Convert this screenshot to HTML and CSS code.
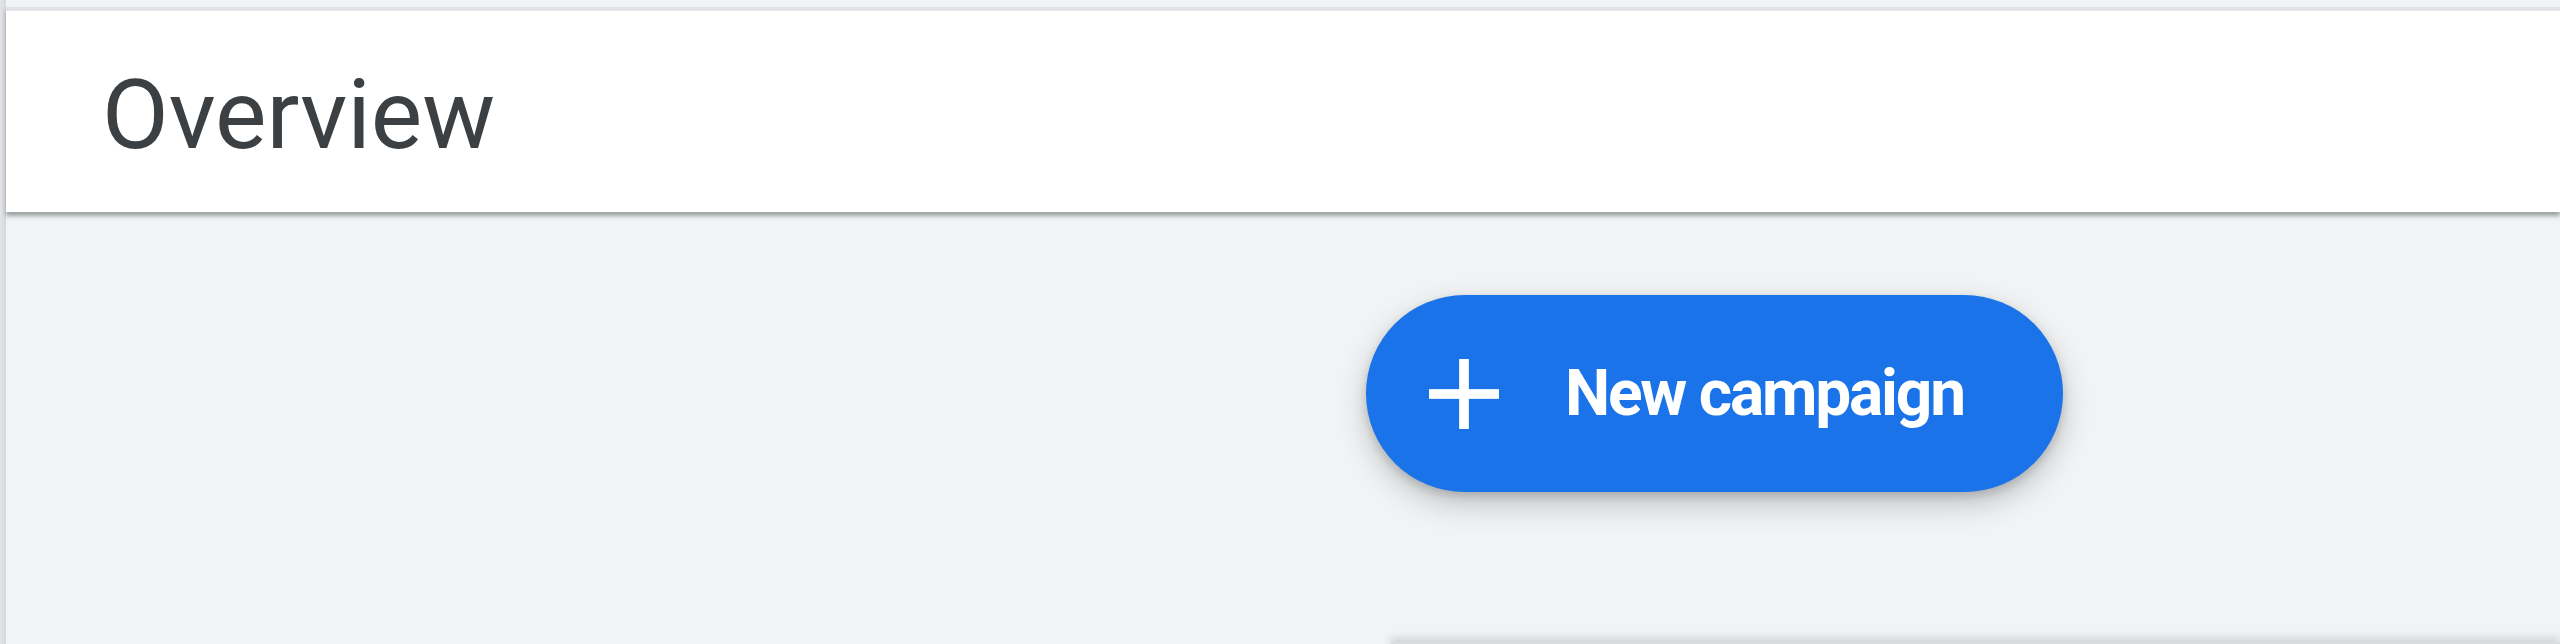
FILE: index.html
```html
<!DOCTYPE html>
<html lang="en">
<head>
<meta charset="utf-8">
<title>Overview</title>
<link rel="stylesheet" href="styles.css">
</head>
<body>
<div class="app">
  <div class="rail"></div>
  <div class="main">
    <header class="header">
      <h1 class="title">Overview</h1>
    </header>
    <section class="content">
      <button class="fab" type="button">
        <svg class="fab-icon" viewBox="0 0 72 72" aria-hidden="true">
          <rect x="31" y="0" width="10" height="72" fill="#fff"/>
          <rect x="0" y="31" width="72" height="10" fill="#fff"/>
        </svg>
        <span class="fab-label">New campaign</span>
      </button>
      <div class="card"></div>
    </section>
  </div>
</div>
</body>
</html>
```

FILE: styles.css
```css
html, body {
  margin: 0;
  padding: 0;
  height: 100%;
  overflow: hidden;
}

body {
  background: #f1f3f4;
  font-family: Roboto, "Liberation Sans", Arial, sans-serif;
}

.app {
  display: flex;
  height: 100%;
}

.rail {
  width: 6px;
  flex: none;
  background: linear-gradient(to right, #e3e4e7, #d6d8dc);
}

.main {
  flex: 1;
  display: flex;
  flex-direction: column;
  padding-top: 7px;
  min-width: 0;
}

.header {
  height: 201px;
  flex: none;
  background: #ffffff;
  border-top: 4px solid #e2e3e6;
  display: flex;
  align-items: center;
  padding-left: 96px;
  box-shadow: 0 4px 4px rgba(60, 64, 67, 0.45);
  position: relative;
  z-index: 1;
}

.title {
  margin: 0;
  font-family: Roboto, "Liberation Sans", Arial, sans-serif;
  font-weight: 400;
  font-size: 97px;
  line-height: 1;
  color: #3c4043;
  letter-spacing: 0;
  margin-top: 8px;
}

.content {
  flex: 1;
  display: flex;
  flex-direction: column;
  align-items: flex-start;
  padding: 83px 0 0 1360px;
}

.fab {
  display: flex;
  align-items: center;
  height: 197px;
  padding: 0 99px 0 63px;
  border: none;
  border-radius: 999px;
  background: #1a73e8;
  color: #ffffff;
  box-shadow: 0 12px 28px rgba(60, 64, 67, 0.28), 0 4px 8px rgba(60, 64, 67, 0.2);
  cursor: pointer;
}

.fab-icon {
  width: 70px;
  height: 70px;
  flex: none;
  margin-right: 66px;
}

.fab-label {
  font-family: Roboto, "Liberation Sans", Arial, sans-serif;
  font-weight: 700;
  font-size: 64px;
  letter-spacing: -2.2px;
  line-height: 1;
}

.card {
  align-self: stretch;
  margin-top: 150px;
  margin-left: 25px;
  height: 200px;
  background: #ffffff;
  border-top: 2px solid #dadce0;
  box-shadow: 0 -4px 8px rgba(60, 64, 67, 0.18);
}
```
